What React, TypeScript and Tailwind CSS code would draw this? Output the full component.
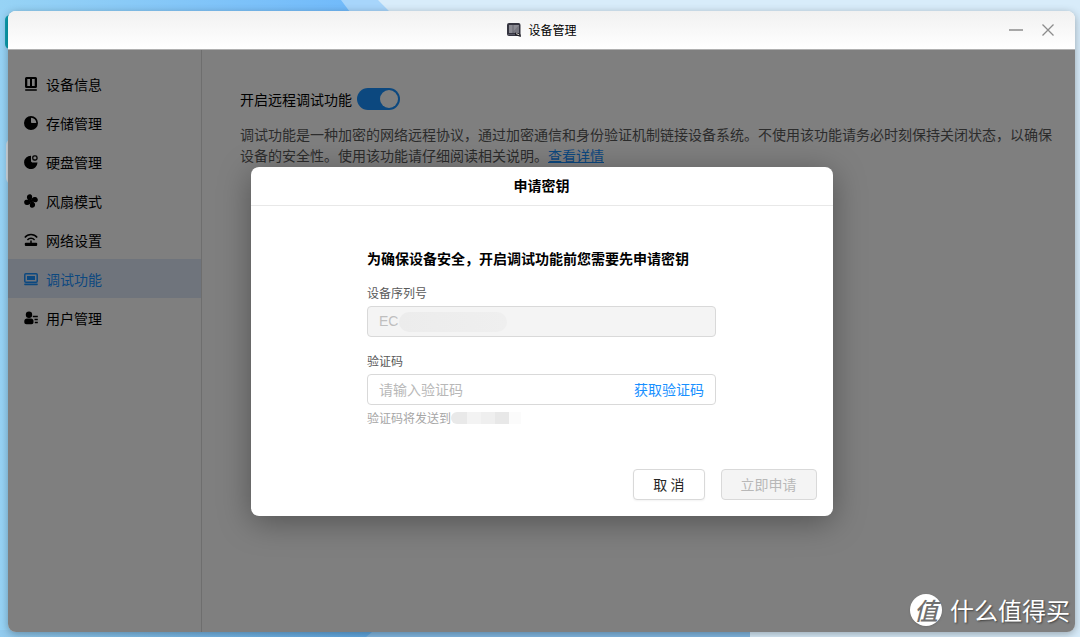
import { useState } from "react";
import type { ReactNode } from "react";

const blade = "M7 7.300C4.700 6.800 2.700 5.200 2.900 2.900 3.100.6 5.300-.3 6.900.4 8.900 1.300 8.200 4.300 7 7.300Z";

const menu: { label: string; icon: ReactNode }[] = [
  {
    label: "设备信息",
    icon: (
      <>
        <path
          fillRule="evenodd"
          d="M2.500 0h9A1.500 1.500 0 0 1 13 1.500v8A1.500 1.500 0 0 1 11.500 11h-9A1.500 1.500 0 0 1 1 9.500v-8A1.500 1.500 0 0 1 2.500 0ZM3.300 2v7h2.700V2ZM8 2v7h2.700V2Z"
        />
        <rect x="1" y="12.200" width="12" height="1.500" rx=".7" />
      </>
    ),
  },
  {
    label: "存储管理",
    icon: (
      <path
        fillRule="evenodd"
        d="M7 0a7 7 0 1 1 0 14A7 7 0 0 1 7 0ZM7 1.700V6.200Q7 7 7.800 7h4.500A5.300 5.300 0 0 0 7 1.700Z"
      />
    ),
  },
  {
    label: "硬盘管理",
    icon: (
      <>
        <path d="M7 .7v5.800L8.200 7.500H13.500A6.700 6.700 0 1 1 7 .7Z" />
        <rect x="8.800" y=".8" width="4.200" height="4.200" rx="1.600" fill="none" stroke="currentColor" strokeWidth="1.300" />
      </>
    ),
  },
  {
    label: "风扇模式",
    icon: (
      <>
        <path d={blade} />
        <path d={blade} transform="rotate(90 7 7)" />
        <path d={blade} transform="rotate(180 7 7)" />
        <path d={blade} transform="rotate(270 7 7)" />
      </>
    ),
  },
  {
    label: "网络设置",
    icon: (
      <>
        <path
          d="M.8 4.600C4.200.6 9.800.6 13.200 4.600M3.400 6.900c2-2.100 5.200-2.100 7.200 0M7 7.400V10"
          fill="none"
          stroke="currentColor"
          strokeWidth="1.500"
        />
        <rect x=".8" y="9.800" width="12.400" height="3.200" rx="1" />
      </>
    ),
  },
  {
    label: "调试功能",
    icon: (
      <>
        <rect x=".8" y="1.700" width="12.400" height="8.600" rx="1" fill="none" stroke="currentColor" strokeWidth="1.500" />
        <rect x="3" y="4" width="8" height="4" />
        <rect x=".2" y="11.600" width="13.600" height="1.600" rx=".6" />
      </>
    ),
  },
  {
    label: "用户管理",
    icon: (
      <>
        <circle cx="5" cy="3.800" r="3.200" />
        <path d="M3 7.500h4c1.500 0 2.500 1 2.500 2.500v1.200c0 1.300-.8 2-2 2h-5c-1.400 0-2.200-.7-2.200-2V9.900C.3 8.400 1.400 7.500 3 7.500Z" />
        <path d="M8.800 5.500h5M10.500 8.500h3.300M10.800 11.500h3" fill="none" stroke="currentColor" strokeWidth="1.400" />
      </>
    ),
  },
];

function Wallpaper() {
  return (
    <svg
      className="absolute inset-0 w-full h-full"
      viewBox="0 0 1080 637"
      preserveAspectRatio="none"
      aria-hidden="true"
    >
      <defs>
        <linearGradient id="sky">
          <stop offset="0" stopColor="#97d3f5" />
          <stop offset=".34" stopColor="#6fb9fb" />
          <stop offset="1" stopColor="#9ccbf5" />
        </linearGradient>
        <linearGradient id="ground">
          <stop offset="0" stopColor="#93cbee" />
          <stop offset=".34" stopColor="#62a9e2" />
          <stop offset="1" stopColor="#a5cbea" />
        </linearGradient>
      </defs>
      <rect width="1080" height="637" fill="url(#sky)" />
      <rect y="630" width="1080" height="7" fill="url(#ground)" />
      <path d="M341 0h739v637h-480L350 12Z" fill="#a7d5fb" />
      <path d="M378 0h702v637H750L390 12Z" fill="#d8ecfa" />
      <path d="M372 632h378v5H366Z" fill="#83b9e3" />
      <rect x="5" y="15" width="20" height="34" rx="5" fill="#0c9fb0" />
      <rect x="6" y="139" width="20" height="45" rx="6" fill="#d5dde3" />
    </svg>
  );
}

function TitleBar() {
  return (
    <header className="flex items-center h-[39px] px-5 bg-linear-to-b from-[#f1f1f1] to-white border-b border-[#b0b0b0]">
      <div className="flex-1" />
      <div className="flex items-center gap-2">
        <svg className="w-[14px] h-[14px]" viewBox="0 0 14 14" aria-hidden="true">
          <rect width="13.500" height="13" rx="2" fill="#34343f" />
          <rect x="2" y="2" width="10" height="8" fill="#777780" />
          <path d="M2 2h10L5 10H2Z" fill="#8b8b93" />
          <path d="M6 2v8" stroke="#60606b" strokeWidth=".8" />
          <path d="M1 11.500h7" stroke="#555563" />
          <path d="M8 9.500 13.800 11.500V14L8 12Z" fill="#1d1d25" />
          <path d="m9.200 10.600 3 1.200" stroke="#d9d4cc" />
        </svg>
        <h1 className="text-xs text-black">设备管理</h1>
      </div>
      <div className="flex flex-1 justify-end gap-[18px] text-[#8c8c8c]">
        <button aria-label="最小化">
          <svg className="w-[14px] h-[14px]" viewBox="0 0 14 14">
            <path d="M0 7h14" stroke="currentColor" strokeWidth="1.500" />
          </svg>
        </button>
        <button aria-label="关闭">
          <svg className="w-[14px] h-[14px]" viewBox="0 0 14 14">
            <path d="m1.500 1.500 11 11M12.500 1.500l-11 11" stroke="currentColor" strokeWidth="1.300" />
          </svg>
        </button>
      </div>
    </header>
  );
}

function Sidebar() {
  return (
    <nav className="w-[194px] shrink-0 pt-[14px] border-r border-[#dcdcdc]">
      {menu.map((item) => (
        <a
          key={item.label}
          href="#"
          className={
            item.label === "调试功能"
              ? "flex items-center gap-2 h-[39px] px-4 bg-[#dfe9f8] text-[#1890ff]"
              : "flex items-center gap-2 h-[39px] px-4 text-black"
          }
        >
          <svg className="w-[14px] h-[14px]" viewBox="0 0 14 14" fill="currentColor" aria-hidden="true">
            {item.icon}
          </svg>
          <span>{item.label}</span>
        </a>
      ))}
    </nav>
  );
}

function KeyDialog() {
  const [code, setCode] = useState("");

  return (
    <div
      role="dialog"
      aria-labelledby="dialog-title"
      className="w-full max-w-[582px] rounded-lg bg-white shadow-[0_6px_32px_rgba(0,0,0,0.35)]"
    >
      <h2
        id="dialog-title"
        className="h-[39px] leading-9 text-center font-bold text-black border-b border-[#e8e8e8]"
      >
        申请密钥
      </h2>

      <form className="mx-auto max-w-[349px] pt-10">
        <p className="leading-6 -mr-8 font-bold text-black">
          为确保设备安全，开启调试功能前您需要先申请密钥
        </p>

        <label htmlFor="serial" className="block mt-[14px] mb-1 text-xs leading-[18px] text-[#595959]">
          设备序列号
        </label>
        <div className="relative">
          <input
            id="serial"
            disabled
            defaultValue="EC"
            className="block w-full h-[31px] px-[11px] rounded border border-[#d9d9d9] bg-[#f4f4f4] text-[#bfbfbf] font-['Liberation_Sans','Noto_Sans_CJK_SC',sans-serif]"
          />
          <span className="absolute left-8 top-[6px] w-[108px] h-5 rounded-full bg-linear-to-r from-[#ececec] to-[#efefef]" />
        </div>

        <label htmlFor="code" className="block mt-[15px] mb-1 text-xs leading-[18px] text-[#595959]">
          验证码
        </label>
        <div className="flex items-center h-[31px] px-[11px] rounded border border-[#d9d9d9]">
          <input
            id="code"
            value={code}
            onChange={(e) => setCode(e.target.value)}
            placeholder="请输入验证码"
            className="flex-1 min-w-0 outline-none placeholder:text-[#b8b8b8]"
          />
          <button type="button" className="text-[#1890ff]">
            获取验证码
          </button>
        </div>
        <div className="flex items-center mt-1 text-xs leading-[18px] text-[#a6a6a6]">
          <span>验证码将发送到</span>
          <span className="flex h-3 overflow-hidden rounded-l-full">
            <span className="w-4 bg-[#e9e9e9]" />
            <span className="w-[14px] bg-[#f3f3f3]" />
            <span className="w-[14px] bg-[#efefef]" />
            <span className="w-[14px] bg-[#e8e8e8]" />
            <span className="w-3 bg-[#fbfbfb]" />
          </span>
        </div>
      </form>

      <div className="flex justify-end gap-4 pt-[42px] pr-4 pb-4">
        <button className="h-[31px] px-[19px] rounded border border-[#d9d9d9] bg-white text-[#262626] shadow-xs">
          取 消
        </button>
        <button
          disabled
          className="h-[31px] px-[19px] rounded border border-[#d9d9d9] bg-[#f4f4f4] text-[#b8b8b8]"
        >
          立即申请
        </button>
      </div>
    </div>
  );
}

function Watermark() {
  return (
    <div className="absolute right-[10px] bottom-[11px] flex items-center gap-2 text-white text-2xl leading-8 [text-shadow:1px_1px_2px_rgba(0,0,0,0.5)]">
      <span className="flex items-center justify-center w-8 h-8 rounded-full bg-white text-[#6f6f6f] font-medium italic shadow [text-shadow:none]">
        值
      </span>
      <span>什么值得买</span>
    </div>
  );
}

export default function App() {
  const [remote, setRemote] = useState(true);

  return (
    <div className="relative h-screen overflow-hidden pt-[11px] pr-[5px] pb-[5px] pl-2 font-['Noto_Sans_CJK_SC',sans-serif] text-sm">
      <Wallpaper />

      <div className="relative flex flex-col h-full rounded-lg overflow-hidden bg-white shadow-[0_2px_8px_rgba(0,0,0,0.3)]">
        <TitleBar />

        <div className="relative flex flex-1 min-h-0">
          <Sidebar />

          <main className="flex-1 pt-[38px] pl-[38px] pr-5">
            <div className="flex items-center gap-[5px]">
              <label htmlFor="remote" className="text-black">
                开启远程调试功能
              </label>
              <input
                id="remote"
                type="checkbox"
                role="switch"
                checked={remote}
                onChange={(e) => setRemote(e.target.checked)}
                className="relative appearance-none w-[43px] h-[22px] rounded-full bg-[#bfbfbf] checked:bg-[#1890ff] after:absolute after:top-[2px] after:left-[2px] after:w-[18px] after:h-[18px] after:rounded-full after:bg-white checked:after:left-[23px]"
              />
            </div>
            <p className="mt-[14px] leading-[21px] text-[#595959]">
              调试功能是一种加密的网络远程协议，通过加密通信和身份验证机制链接设备系统。不使用该功能请务必时刻保持关闭状态，以确保设备的安全性。使用该功能请仔细阅读相关说明。
              <a href="#" className="text-[#1890ff] underline">
                查看详情
              </a>
            </p>
          </main>

          <div className="absolute inset-0 flex items-center justify-center bg-black/50">
            <KeyDialog />
          </div>
        </div>
      </div>

      <Watermark />
    </div>
  );
}
